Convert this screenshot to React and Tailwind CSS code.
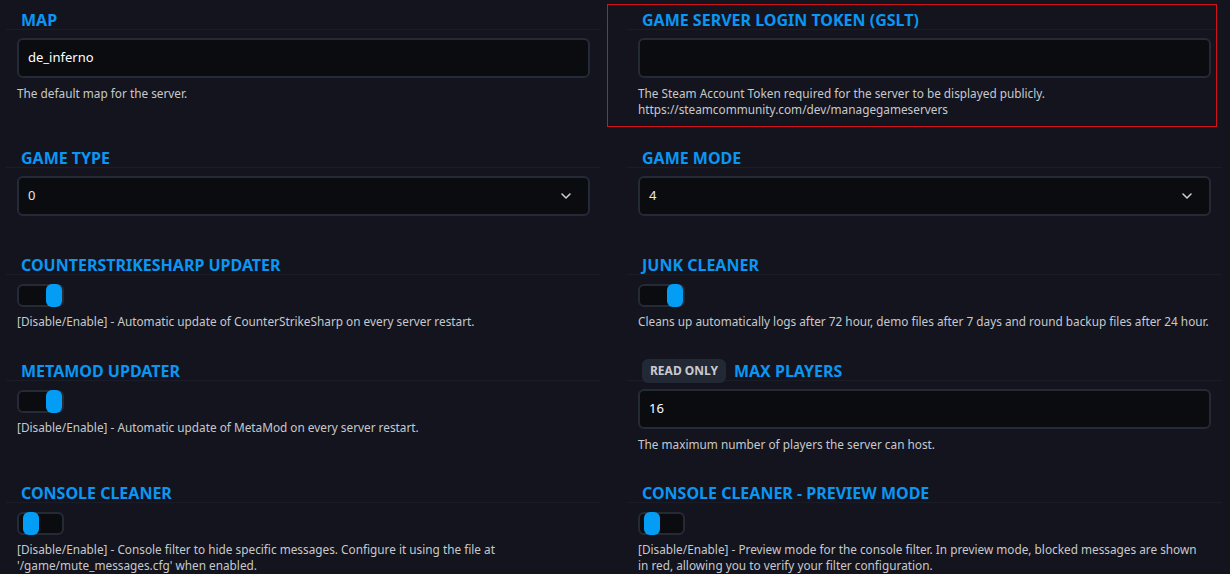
import { useState } from 'react';

const FONT = { fontFamily: '"Noto Sans", "Open Sans", sans-serif' };

const Heading = ({ children, badge }) => (
    <div className="-mx-[11px] pl-[15px] h-5 flex items-center gap-2 border-b border-[#1a1d27]">
        {badge && (
            <span className="h-6 px-2 flex items-center rounded-md bg-[#232835] text-[12px] font-bold text-[#c9cbd0]">
                {badge}
            </span>
        )}
        <span className="text-[16px] leading-5 font-bold text-[#0a96f2] uppercase">{children}</span>
    </div>
);

const Desc = ({ children, className = '' }) => (
    <p className={`text-[11.8px] leading-4 text-[#c7c9ce] ${className}`}>{children}</p>
);

const TextInput = ({ value }) => (
    <div className="mt-2 h-10 rounded-md border-2 border-[#252a37] bg-[#0b0c10] px-[9px] flex items-center text-[13px] text-white">
        {value}
    </div>
);

const Select = ({ value }) => (
    <div className="mt-2 h-10 rounded-md border-2 border-[#252a37] bg-[#0b0c10] pl-[9px] pr-[17px] flex items-center justify-between text-[13px] text-[#e6e6e6]">
        <span>{value}</span>
        <svg width="10" height="6" viewBox="0 0 10 6" fill="none">
            <path d="M1 1l4 4 4-4" stroke="#d0d2d6" strokeWidth="1.5" strokeLinecap="round" strokeLinejoin="round" />
        </svg>
    </div>
);

const Toggle = ({ defaultOn }) => {
    const [on, setOn] = useState(defaultOn);
    return (
        <button
            type="button"
            onClick={() => setOn(!on)}
            className={`mt-[9px] w-[47px] h-[23px] rounded-md border-2 border-[#252a37] bg-[#0b0c10] flex items-center ${on ? 'justify-end' : 'justify-start pl-[4px]'}`}
        >
            <span className="w-4 h-[23px] rounded-[6px] bg-[#049df5]" />
        </button>
    );
};

const Row = ({ children, className = '' }) => (
    <div className={`grid grid-cols-[573px_573px] gap-x-12 items-start ${className}`}>{children}</div>
);

export default function App() {
    return (
        <div className="min-h-screen w-[1230px] bg-[#13141d] pl-[17px] overflow-hidden" style={FONT}>
            <Row className="pt-[4px]">
                <div className="pt-[6px]">
                    <Heading>Map</Heading>
                    <TextInput value="de_inferno" />
                    <Desc className="mt-[7px]">The default map for the server.</Desc>
                </div>
                <div className="-ml-[31px] pl-[30px] -mr-[6px] pr-[5px] pt-[5px] pb-[9px] border border-[#d3121a] overflow-hidden">
                    <Heading>Game Server Login Token (GSLT)</Heading>
                    <TextInput value="" />
                    <Desc className="mt-[7px]">
                        The Steam Account Token required for the server to be displayed publicly.
                        <br />
                        https://steamcommunity.com/dev/managegameservers
                    </Desc>
                </div>
            </Row>

            <Row className="mt-[21px]">
                <div>
                    <Heading>Game Type</Heading>
                    <Select value="0" />
                </div>
                <div>
                    <Heading>Game Mode</Heading>
                    <Select value="4" />
                </div>
            </Row>

            <Row className="mt-[39px]">
                <div>
                    <Heading>CounterStrikeSharp Updater</Heading>
                    <Toggle defaultOn />
                    <Desc className="mt-[6px]">[Disable/Enable] - Automatic update of CounterStrikeSharp on every server restart.</Desc>
                </div>
                <div>
                    <Heading>Junk Cleaner</Heading>
                    <Toggle defaultOn />
                    <Desc className="mt-[6px] whitespace-nowrap">
                        Cleans up automatically logs after 72 hour, demo files after 7 days and round backup files after 24 hour.
                    </Desc>
                </div>
            </Row>

            <Row className="mt-[32px]">
                <div>
                    <Heading>Metamod Updater</Heading>
                    <Toggle defaultOn />
                    <Desc className="mt-[6px]">[Disable/Enable] - Automatic update of MetaMod on every server restart.</Desc>
                </div>
                <div>
                    <Heading badge="READ ONLY">Max Players</Heading>
                    <TextInput value="16" />
                    <Desc className="mt-[7px]">The maximum number of players the server can host.</Desc>
                </div>
            </Row>

            <Row className="mt-[31px]">
                <div>
                    <Heading>Console Cleaner</Heading>
                    <Toggle defaultOn={false} />
                    <Desc className="mt-[6px]">
                        [Disable/Enable] - Console filter to hide specific messages. Configure it using the file at
                        <br />
                        '/game/mute_messages.cfg' when enabled.
                    </Desc>
                </div>
                <div>
                    <Heading>Console Cleaner - Preview Mode</Heading>
                    <Toggle defaultOn={false} />
                    <Desc className="mt-[6px]">
                        [Disable/Enable] - Preview mode for the console filter. In preview mode, blocked messages are shown
                        <br />
                        in red, allowing you to verify your filter configuration.
                    </Desc>
                </div>
            </Row>
        </div>
    );
}
